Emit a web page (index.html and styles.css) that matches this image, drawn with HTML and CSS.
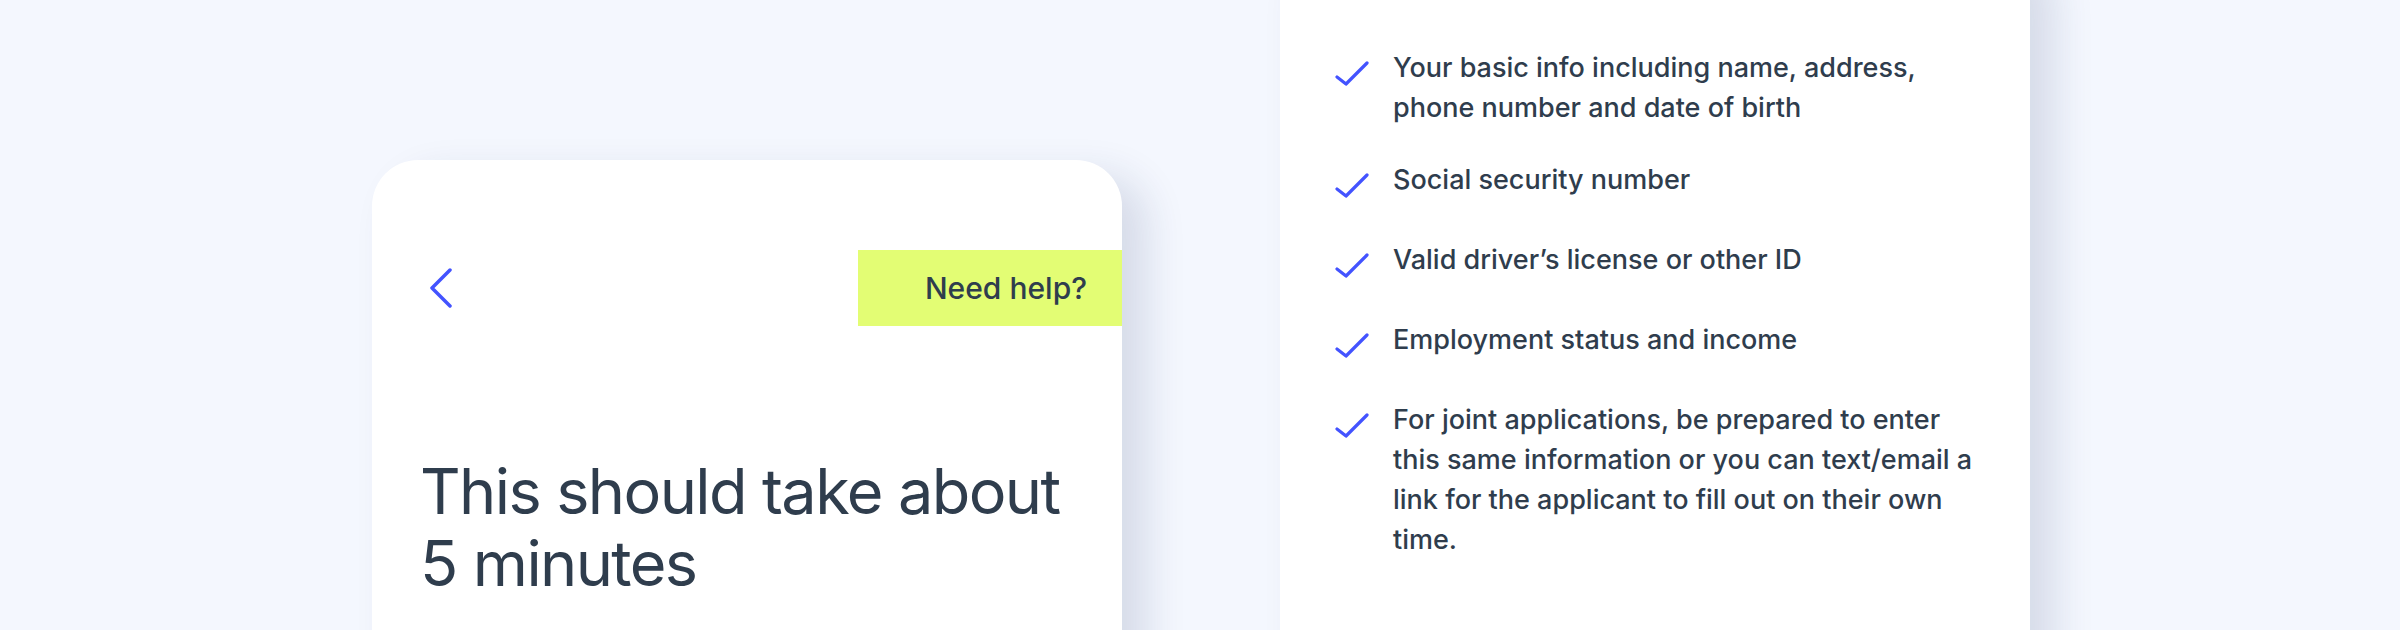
FILE: index.html
```html
<!DOCTYPE html>
<html lang="en">

<head>
    <meta charset="UTF-8">
    <meta name="viewport" content="width=device-width, initial-scale=1.0">
    <title>Before you start</title>
    <link rel="stylesheet" href="styles.css">
</head>

<body>
    <div class="page">
        <section class="card intro-card">
            <div class="intro-header">
                <a class="back-link" href="#" aria-label="Back">
                    <svg width="24" height="40" viewBox="0 0 24 40">
                        <polyline points="21,2 3,20 21,38" fill="none" stroke="#4353ff" stroke-width="3.5"
                            stroke-linecap="round" stroke-linejoin="round" />
                    </svg>
                </a>
                <button class="help-button">Need help?</button>
            </div>
            <h1 class="intro-title">This should take about 5 minutes</h1>
        </section>

        <section class="card checklist-card">
            <ul class="check-list">
                <li>
                    <svg class="check" width="34" height="26" viewBox="0 0 34 26">
                        <polyline points="2,17 11,24 32,3" fill="none" stroke="#4353ff" stroke-width="3.2"
                            stroke-linecap="round" stroke-linejoin="round" />
                    </svg>
                    <span>Your basic info including name, address, phone number and date of birth</span>
                </li>
                <li>
                    <svg class="check" width="34" height="26" viewBox="0 0 34 26">
                        <polyline points="2,17 11,24 32,3" fill="none" stroke="#4353ff" stroke-width="3.2"
                            stroke-linecap="round" stroke-linejoin="round" />
                    </svg>
                    <span>Social security number</span>
                </li>
                <li>
                    <svg class="check" width="34" height="26" viewBox="0 0 34 26">
                        <polyline points="2,17 11,24 32,3" fill="none" stroke="#4353ff" stroke-width="3.2"
                            stroke-linecap="round" stroke-linejoin="round" />
                    </svg>
                    <span>Valid driver’s license or other ID</span>
                </li>
                <li>
                    <svg class="check" width="34" height="26" viewBox="0 0 34 26">
                        <polyline points="2,17 11,24 32,3" fill="none" stroke="#4353ff" stroke-width="3.2"
                            stroke-linecap="round" stroke-linejoin="round" />
                    </svg>
                    <span>Employment status and income</span>
                </li>
                <li>
                    <svg class="check" width="34" height="26" viewBox="0 0 34 26">
                        <polyline points="2,17 11,24 32,3" fill="none" stroke="#4353ff" stroke-width="3.2"
                            stroke-linecap="round" stroke-linejoin="round" />
                    </svg>
                    <span>For joint applications, be prepared to enter this same information or you can
                        text/email a link for the applicant to fill out on their own time.</span>
                </li>
            </ul>
        </section>
    </div>
</body>

</html>
```

FILE: styles.css
```css
html, body {
    margin: 0;
    height: 630px;
    overflow: hidden;
}

body {
    background-color: #f4f7fe;
    font-family: Inter, "Noto Sans", sans-serif;
    color: #2f3d4d;
}

.page {
    display: flex;
    align-items: flex-start;
    gap: 158px;
    padding-left: 372px;
}

.card {
    width: 750px;
    box-sizing: border-box;
    background-color: #ffffff;
    border-radius: 46px;
    box-shadow: 24px 16px 40px rgba(30, 50, 100, 0.14);
}

/* left card */
.intro-card {
    margin-top: 160px;
    height: 620px;
    padding: 90px 0 0 48px;
}

.intro-header {
    display: flex;
    align-items: center;
    justify-content: space-between;
}

.back-link {
    display: block;
    margin-left: 9px;
    line-height: 0;
}

.help-button {
    width: 264px;
    height: 76px;
    padding: 0 35px 0 0;
    border: none;
    background-color: #e3fd74;
    color: #2f3d4d;
    font-family: inherit;
    font-size: 30px;
    font-weight: 500;
    text-align: right;
    cursor: pointer;
}

.intro-title {
    margin: 129px 0 0;
    max-width: 660px;
    font-size: 63px;
    font-weight: 400;
    line-height: 72px;
    letter-spacing: -1.6px;
}

/* right card */
.checklist-card {
    margin-top: -60px;
    height: 760px;
    padding: 108px 50px 0 55px;
}

.check-list {
    margin: 0;
    padding: 0;
    list-style: none;
}

.check-list li {
    display: flex;
    gap: 24px;
    margin-bottom: 40px;
    font-size: 27px;
    font-weight: 500;
    line-height: 40px;
}

.check-list li:first-child {
    margin-bottom: 32px;
}

.check {
    flex: none;
    margin-top: 12px;
}
```
